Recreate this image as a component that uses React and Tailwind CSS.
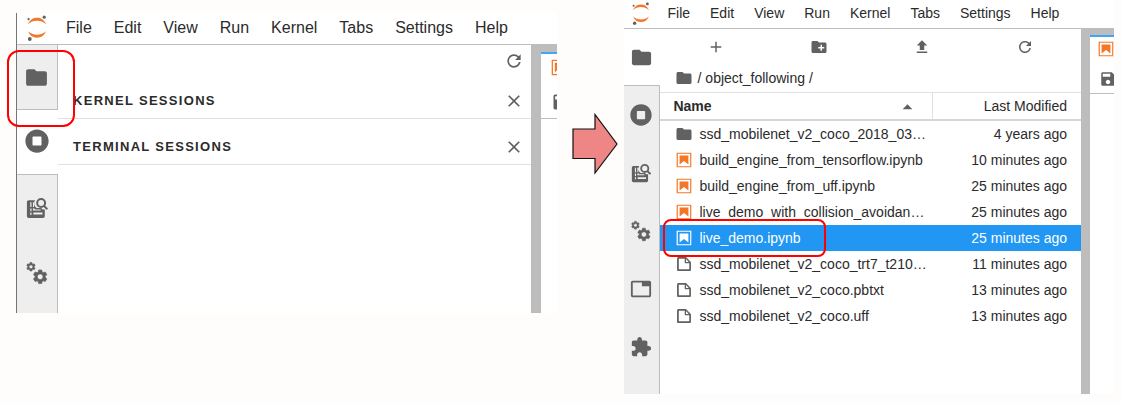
import React from "react";

const PATHS = {
  folder: "M10 4H4c-1.1 0-1.99.9-1.99 2L2 18c0 1.1.9 2 2 2h16c1.1 0 2-.9 2-2V8c0-1.1-.9-2-2-2h-8l-2-2z",
  newFolder:
    "M20 6h-8l-2-2H4c-1.11 0-1.99.89-1.99 2L2 18c0 1.11.89 2 2 2h16c1.11 0 2-.89 2-2V8c0-1.11-.89-2-2-2zm-1 8h-3v3h-2v-3h-3v-2h3V9h2v3h3v2z",
  add: "M19 13h-6v6h-2v-6H5v-2h6V5h2v6h6v2z",
  upload: "M9 16h6v-6h4l-7-7-7 7h4zm-4 2h14v2H5z",
  close:
    "M19 6.41L17.59 5 12 10.59 6.41 5 5 6.41 10.59 12 5 17.59 6.41 19 12 13.41 17.59 19 19 17.59 13.41 12z",
  tab: "M21 3H3c-1.1 0-2 .9-2 2v14c0 1.1.9 2 2 2h18c1.1 0 2-.9 2-2V5c0-1.1-.9-2-2-2zm0 16H3V5h10v4h8v10z",
  extension:
    "M20.5 11H19V7c0-1.1-.9-2-2-2h-4V3.5C13 2.12 11.88 1 10.5 1S8 2.12 8 3.5V5H4c-1.1 0-1.99.9-1.99 2v3.8H3.5c1.49 0 2.7 1.21 2.7 2.7s-1.21 2.7-2.7 2.7H2V20c0 1.1.9 2 2 2h3.8v-1.5c0-1.49 1.21-2.7 2.7-2.7 1.49 0 2.7 1.21 2.7 2.7V22H17c1.1 0 2-.9 2-2v-4h1.5c1.38 0 2.5-1.12 2.5-2.5S21.88 11 20.5 11z",
  save: "M17 3H5c-1.11 0-2 .9-2 2v14c0 1.1.89 2 2 2h14c1.1 0 2-.9 2-2V7l-4-4zm-5 16c-1.66 0-3-1.34-3-3s1.34-3 3-3 3 1.34 3 3-1.34 3-3 3zm3-10H5V5h10v4z",
  sort: "M3 17l9-9 9 9z",
};

const REFRESH =
  "M9 13.5c-2.49 0-4.5-2.01-4.5-4.5S6.51 4.5 9 4.5c1.24 0 2.36.52 3.17 1.33L10 8h5V3l-1.76 1.76C12.15 3.68 10.66 3 9 3 5.69 3 3.01 5.69 3.01 9S5.69 15 9 15c2.97 0 5.43-2.16 5.9-5h-1.52c-.46 2-2.24 3.5-4.38 3.5z";
const RUNNING =
  "M256 8C119 8 8 119 8 256s111 248 248 248 248-111 248-248S393 8 256 8zm96 328c0 8.8-7.2 16-16 16H176c-8.8 0-16-7.2-16-16V176c0-8.8 7.2-16 16-16h160c8.8 0 16 7.2 16 16v160z";
const FILE =
  "M19.3 8.2l-5.5-5.5c-.3-.3-.7-.5-1.2-.5H3.9c-.8.1-1.6.9-1.6 1.8v14.1c0 .9.7 1.6 1.6 1.6h14.2c.9 0 1.6-.7 1.6-1.6V9.4c.1-.5-.1-.9-.4-1.2zm-5.8-3.3l3.4 3.6h-3.4V4.9zm3.9 12.7H4.7c-.1 0-.2 0-.2-.2V4.7c0-.2.1-.3.2-.3h7.2v4.4s0 .8.3 1.1c.3.3 1.1.3 1.1.3h4.3v7.2s-.1.2-.2.2z";
const GEAR =
  "M19.43 12.98c.04-.32.07-.64.07-.98s-.03-.66-.07-.98l2.11-1.65c.19-.15.24-.42.12-.64l-2-3.46c-.12-.22-.39-.3-.61-.22l-2.49 1c-.52-.4-1.08-.73-1.69-.98l-.38-2.65C14.46 2.18 14.25 2 14 2h-4c-.25 0-.46.18-.49.42l-.38 2.65c-.61.25-1.17.59-1.69.98l-2.49-1c-.23-.09-.49 0-.61.22l-2 3.46c-.13.22-.07.49.12.64l2.11 1.65c-.04.32-.07.65-.07.98s.03.66.07.98l-2.11 1.65c-.19.15-.24.42-.12.64l2 3.46c.12.22.39.3.61.22l2.49-1c.52.4 1.08.73 1.69.98l.38 2.65c.03.24.24.42.49.42h4c.25 0 .46-.18.49-.42l.38-2.65c.61-.25 1.17-.59 1.69-.98l2.49 1c.23.09.49 0 .61-.22l2-3.46c.12-.22.07-.49-.12-.64l-2.11-1.65zM12 16.2c-2.32 0-4.2-1.88-4.2-4.2s1.880-4.2 4.2-4.2 4.2 1.880 4.2 4.2-1.880 4.2-4.2 4.2z";

function Icon({ name, className = "size-4" }) {
  const base = `block shrink-0 fill-current ${className}`;
  if (name === "refresh")
    return (
      <svg viewBox="0 0 18 18" className={base} aria-hidden="true">
        <path d={REFRESH} />
      </svg>
    );
  if (name === "running")
    return (
      <svg viewBox="0 0 512 512" className={base} aria-hidden="true">
        <path d={RUNNING} />
      </svg>
    );
  if (name === "file")
    return (
      <svg viewBox="1 1 20 20" className={base} aria-hidden="true">
        <path d={FILE} />
      </svg>
    );
  if (name === "notebook")
    return (
      <svg viewBox="1 1 20 20" className={base} aria-hidden="true">
        <path d="M18.7 3.3v15.4H3.3V3.3h15.4m1.5-1.5H1.8v18.3h18.3l.1-18.3z" />
        <path d="M16.5 16.5l-5.4-4.3-5.6 4.3v-11h11z" />
      </svg>
    );
  if (name === "gears")
    return (
      <svg viewBox="0 0 24 24" className={base} stroke="currentColor" aria-hidden="true">
        <path d={GEAR} strokeWidth="1.2" transform="translate(0.8 0.6) scale(0.43)" />
        <path d={GEAR} strokeWidth="1" transform="translate(7 7.6) scale(0.68)" />
      </svg>
    );
  if (name === "palette")
    return (
      <svg viewBox="0 0 24 24" className={base} aria-hidden="true">
        <path
          fillRule="evenodd"
          d="M3 3.500H9.800A6.800 6.800 0 0 0 11.500 12H16.500L18.200 13.500H20.500V21A2 2 0 0 1 18.500 23H3A2 2 0 0 1 1 21V5.500A2 2 0 0 1 3 3.500zM4.700 5.700V11H6V5.700zM7.600 5.700V11H8.800V5.700zM4.700 12.500V15.500H6V12.500zM4.700 17V19.500H6V17zM8 17V19.200H18V17zM7.600 12.500V14.600H16V13.600H9.500V12.500z"
        />
        <circle cx="16.500" cy="6.500" r="4.300" fill="none" stroke="currentColor" strokeWidth="2.200" />
        <path d="M19.400 9.400L23.300 13.300" stroke="currentColor" strokeWidth="2.200" />
      </svg>
    );
  return (
    <svg viewBox="0 0 24 24" className={base} aria-hidden="true">
      <path d={PATHS[name]} />
    </svg>
  );
}

function Logo({ className }) {
  return (
    <svg viewBox="0 0 20 26" className={`block shrink-0 ${className}`} role="img" aria-label="Jupyter">
      <path d="M1 9.200C3 4.700 6 2.800 10 2.800S17 4.700 19 9.200C16.500 6.800 13.500 5.700 10 5.700S3.500 6.800 1 9.200z" fill="#f37726" />
      <path d="M1 16.300C3.500 18.700 6.500 19.700 10 19.700S16.500 18.700 19 16.300C17 20.800 14 22.700 10 22.700S3 20.800 1 16.300z" fill="#f37726" />
      <circle cx="17.200" cy="2.200" r="1.600" fill="#616161" />
      <circle cx="1.600" cy="4.200" r="1.100" fill="#616161" />
      <circle cx="2.800" cy="24" r="1.900" fill="#616161" />
    </svg>
  );
}

const MENUS = ["File", "Edit", "View", "Run", "Kernel", "Tabs", "Settings", "Help"];

function MenuBar({ className, logoClass, listClass }) {
  return (
    <nav className={`flex items-center border-b border-[#bdbdbd] bg-white ${className}`}>
      <Logo className={logoClass} />
      <div className={`flex ${listClass}`}>
        {MENUS.map((m) => (
          <button key={m} type="button">
            {m}
          </button>
        ))}
      </div>
    </nav>
  );
}

function SideTab({ icon, label, className, iconClass }) {
  return (
    <button
      type="button"
      aria-label={label}
      className={`flex w-full shrink-0 items-center justify-center text-[#616161] ${className}`}
    >
      <Icon name={icon} className={iconClass} />
    </button>
  );
}

function SessionHeader({ title }) {
  return (
    <div className="flex h-[46px] items-center justify-between border-b border-[#e0e0e0] pt-[10px] pr-[7px] pl-[15px]">
      <h2 className="text-[13px] font-bold tracking-widest">{title}</h2>
      <button type="button" aria-label={`Close ${title.toLowerCase()}`} className="text-[#616161]">
        <Icon name="close" className="size-5" />
      </button>
    </div>
  );
}

function SessionsWindow() {
  return (
    <section className="mt-[13px] flex h-[300px] min-w-0 flex-[541_1_0%] flex-col border-l border-[#757575] bg-white">
      <MenuBar className="h-8 pb-[2px] pl-[10px]" logoClass="h-[26px] w-5" listClass="gap-[22px] pl-[19px] text-base" />
      <div className="flex min-h-0 flex-1">
        <aside className="relative flex w-[41px] shrink-0 flex-col">
          <SideTab icon="folder" label="File browser" iconClass="size-[25px]" className="h-[65px] border-r border-b border-[#bdbdbd] bg-[#eeeeee] pr-px" />
          <SideTab icon="running" label="Running sessions" iconClass="size-6" className="h-16 bg-white pr-[2px] pb-[2px]" />
          <div className="flex flex-1 flex-col border-t border-r border-[#bdbdbd] bg-[#eeeeee]">
            <SideTab icon="palette" label="Commands" iconClass="size-[22px]" className="h-[65px] pr-px" />
            <SideTab icon="gears" label="Property inspector" iconClass="size-6" className="h-[65px] pr-px" />
          </div>
          <div className="pointer-events-none absolute top-[5px] -left-[10px] z-10 h-[77px] w-[68px] rounded-xl border-2 border-[#ff0000]" />
        </aside>
        <div className="min-w-0 flex-1">
          <div className="flex h-7 items-center justify-end pt-1 pr-[7px]">
            <button type="button" aria-label="Refresh" className="text-[#616161]">
              <Icon name="refresh" className="size-5" />
            </button>
          </div>
          <SessionHeader title="KERNEL SESSIONS" />
          <SessionHeader title="TERMINAL SESSIONS" />
        </div>
        <div className="w-[10px] shrink-0 bg-[#bdbdbd]" />
        <div className="flex w-4 shrink-0 flex-col overflow-hidden">
          <div className="h-[7px] shrink-0 bg-[#bdbdbd]" />
          <div className="h-[67px] shrink-0 border-t-2 border-b border-t-[#42a5f5] border-b-[#bdbdbd] pt-[5px] pl-[10px]">
            <Icon name="notebook" className="size-[17px] text-[#f37726]" />
            <Icon name="save" className="mt-4 size-5 text-[#616161]" />
          </div>
        </div>
      </div>
    </section>
  );
}

const FILES = [
  { icon: "folder", name: "ssd_mobilenet_v2_coco_2018_03…", modified: "4 years ago" },
  { icon: "notebook", name: "build_engine_from_tensorflow.ipynb", modified: "10 minutes ago" },
  { icon: "notebook", name: "build_engine_from_uff.ipynb", modified: "25 minutes ago" },
  { icon: "notebook", name: "live_demo_with_collision_avoidan…", modified: "25 minutes ago" },
  { icon: "notebook", name: "live_demo.ipynb", modified: "25 minutes ago", selected: true },
  { icon: "file", name: "ssd_mobilenet_v2_coco_trt7_t210…", modified: "11 minutes ago" },
  { icon: "file", name: "ssd_mobilenet_v2_coco.pbtxt", modified: "13 minutes ago" },
  { icon: "file", name: "ssd_mobilenet_v2_coco.uff", modified: "13 minutes ago" },
];

function iconStyle(file) {
  if (file.selected) return "size-4 text-white";
  if (file.icon === "notebook") return "size-4 text-[#f37726]";
  if (file.icon === "folder") return "-mx-px size-[18px] text-[#616161]";
  return "size-4 text-[#616161]";
}

function FileTable() {
  return (
    <table className="w-full table-fixed border-separate border-spacing-0 text-sm leading-5">
      <thead>
        <tr className="h-[29px]">
          <th className="border-t border-b-2 border-t-[#e0e0e0] border-b-[#d6d6d6] p-0 text-left font-bold">
            <button type="button" className="flex w-full items-center justify-between pr-[18px] pl-[13px]">
              Name
              <Icon name="sort" className="size-[13px] text-[#616161]" />
            </button>
          </th>
          <th className="w-[149px] border-t border-b-2 border-l border-t-[#e0e0e0] border-b-[#d6d6d6] border-l-[#e0e0e0] p-0 pr-[14px] text-right font-normal">
            Last Modified
          </th>
        </tr>
      </thead>
      <tbody>
        {FILES.map((f) => (
          <tr key={f.name} className={f.selected ? "h-[26px] bg-[#2196f3] text-white" : "h-[26px]"}>
            <td className="relative p-0">
              <div className="flex items-center gap-[7px] pl-4">
                <Icon name={f.icon} className={iconStyle(f)} />
                <span className="whitespace-nowrap">{f.name}</span>
              </div>
              {f.selected && (
                <div className="pointer-events-none absolute -top-[6px] left-[3px] z-10 h-[38px] w-[163px] rounded-lg border-2 border-[#ff0000]" />
              )}
            </td>
            <td className="p-0 pr-[14px] text-right">{f.modified}</td>
          </tr>
        ))}
      </tbody>
    </table>
  );
}

const TOOLS = [
  { icon: "add", label: "New launcher" },
  { icon: "newFolder", label: "New folder" },
  { icon: "upload", label: "Upload files" },
  { icon: "refresh", label: "Refresh file list" },
];

function BrowserWindow() {
  return (
    <section className="flex h-[394px] min-w-0 flex-[490_1_0%] flex-col bg-white">
      <MenuBar className="h-[29px] pb-[2px] pl-2" logoClass="h-[23px] w-[18px]" listClass="gap-5 pl-[17px] text-sm" />
      <div className="flex min-h-0 flex-1">
        <aside className="flex w-9 shrink-0 flex-col">
          <SideTab icon="folder" label="File browser" iconClass="size-[23px]" className="h-14 bg-white pr-px" />
          <div className="flex flex-1 flex-col border-t border-r border-[#bdbdbd] bg-[#eeeeee]">
            <SideTab icon="running" label="Running sessions" iconClass="size-[22px]" className="h-[58px] pr-px" />
            <SideTab icon="palette" label="Commands" iconClass="size-5" className="h-[58px] pr-px" />
            <SideTab icon="gears" label="Property inspector" iconClass="size-[22px]" className="h-[58px] pr-px" />
            <SideTab icon="tab" label="Open tabs" iconClass="size-[22px]" className="h-[58px] pr-px" />
            <SideTab icon="extension" label="Extensions" iconClass="size-[22px]" className="h-[58px] pr-px" />
          </div>
        </aside>
        <div className="min-w-0 flex-1">
          <div className="grid h-9 grid-cols-4 items-center px-1">
            {TOOLS.map((t) => (
              <button key={t.label} type="button" aria-label={t.label} className="flex justify-center text-[#616161]">
                <Icon name={t.icon} className="size-[18px]" />
              </button>
            ))}
          </div>
          <div className="flex h-[27px] items-center gap-1 pb-[2px] pl-[15px] text-sm">
            <Icon name="folder" className="size-[18px] text-[#616161]" />
            <span>/</span>
            <a href="#object_following">object_following</a>
            <span>/</span>
          </div>
          <FileTable />
        </div>
        <div className="w-[9px] shrink-0 bg-[#bdbdbd]" />
        <div className="flex w-6 shrink-0 flex-col overflow-hidden">
          <div className="h-[6px] shrink-0 bg-[#bdbdbd]" />
          <div className="h-[59px] shrink-0 border-t-2 border-b border-t-[#42a5f5] border-b-[#bdbdbd] pt-1 pl-2">
            <Icon name="notebook" className="size-4 text-[#f37726]" />
            <Icon name="save" className="mt-[13px] ml-px size-[18px] text-[#616161]" />
          </div>
        </div>
      </div>
    </section>
  );
}

export default function App() {
  return (
    <main className="flex min-h-screen items-start bg-[#fffdfb] pr-[7px] pl-4 font-['Liberation_Sans',Arial,sans-serif] text-[#2b2b2b]">
      <SessionsWindow />
      <div className="flex w-[67px] shrink-0 justify-center pt-[113px]">
        <svg viewBox="0 0 46 62" className="ml-2 h-[62px] w-[46px]" aria-hidden="true">
          <path d="M1 16H23V1.500L45 31L23 60V45.500H1z" fill="#ee8686" stroke="#111111" strokeWidth="1.200" />
        </svg>
      </div>
      <BrowserWindow />
    </main>
  );
}
